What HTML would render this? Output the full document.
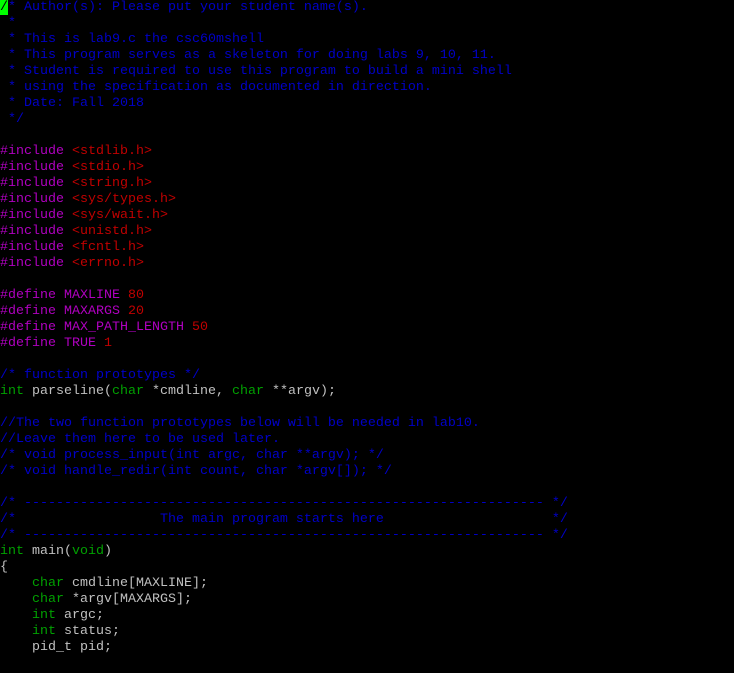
<!DOCTYPE html>
<html><head><meta charset="utf-8"><style>
html,body{margin:0;padding:0;background:#000;width:734px;height:673px;overflow:hidden}
pre{margin:0;padding:0;position:absolute;left:0;top:0;font-family:"Liberation Mono",monospace;font-size:13.33px;line-height:16px;color:#c0c0c0;white-space:pre}
.c{color:#0000c8}.p{color:#b000c0}.s{color:#c00000}.t{color:#00a000}
.cur{background:#00ff00;color:#000}
</style></head><body><pre><span class="c"><span class="cur">/</span>* Author(s): Please put your student name(s).
 *
 * This is lab9.c the csc60mshell
 * This program serves as a skeleton for doing labs 9, 10, 11.
 * Student is required to use this program to build a mini shell
 * using the specification as documented in direction.
 * Date: Fall 2018
 */</span>

<span class="p">#include</span> <span class="s">&lt;stdlib.h&gt;</span>
<span class="p">#include</span> <span class="s">&lt;stdio.h&gt;</span>
<span class="p">#include</span> <span class="s">&lt;string.h&gt;</span>
<span class="p">#include</span> <span class="s">&lt;sys/types.h&gt;</span>
<span class="p">#include</span> <span class="s">&lt;sys/wait.h&gt;</span>
<span class="p">#include</span> <span class="s">&lt;unistd.h&gt;</span>
<span class="p">#include</span> <span class="s">&lt;fcntl.h&gt;</span>
<span class="p">#include</span> <span class="s">&lt;errno.h&gt;</span>

<span class="p">#define MAXLINE</span> <span class="s">80</span>
<span class="p">#define MAXARGS</span> <span class="s">20</span>
<span class="p">#define MAX_PATH_LENGTH</span> <span class="s">50</span>
<span class="p">#define TRUE</span> <span class="s">1</span>

<span class="c">/* function prototypes */</span>
<span class="t">int</span> parseline(<span class="t">char</span> *cmdline, <span class="t">char</span> **argv);

<span class="c">//The two function prototypes below will be needed in lab10.
//Leave them here to be used later.
/* void process_input(int argc, char **argv); */
/* void handle_redir(int count, char *argv[]); */</span>

<span class="c">/* ----------------------------------------------------------------- */
/*                  The main program starts here                     */
/* ----------------------------------------------------------------- */</span>
<span class="t">int</span> main(<span class="t">void</span>)
{
    <span class="t">char</span> cmdline[MAXLINE];
    <span class="t">char</span> *argv[MAXARGS];
    <span class="t">int</span> argc;
    <span class="t">int</span> status;
    pid_t pid;
</pre></body></html>
